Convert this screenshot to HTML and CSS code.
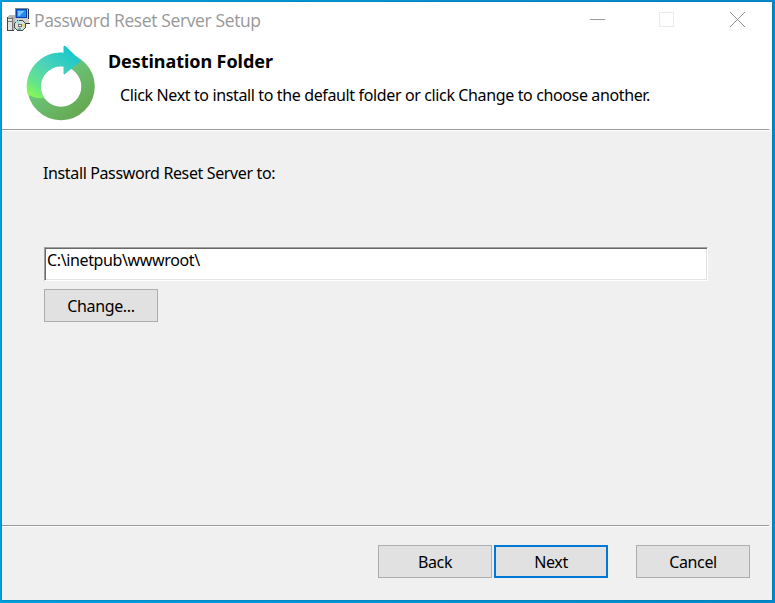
FILE: index.html
```html
<!DOCTYPE html>
<html lang="en">
<head>
<meta charset="utf-8">
<title>Password Reset Server Setup</title>
<link rel="stylesheet" href="styles.css">
</head>
<body>
<div class="window">
  <header class="banner">
    <div class="titlebar">
      <svg class="app-icon" width="24" height="26" viewBox="0 0 24 26" shape-rendering="crispEdges">
        <path d="M9 1h14v11H9z" fill="#c4c8c8"/>
        <path d="M9 1.500h13M9.500 1v10" stroke="#788c98" fill="none"/>
        <path d="M10 2h11v9H10z" fill="#083fae"/>
        <path d="M11 3h9v7h-9z" fill="#2589ef"/>
        <path d="M12 4h6l-4 5h-2z" fill="#72c5ff"/>
        <path d="M22.500 2v10" stroke="#283138"/>
        <path d="M9 12h14v5H9z" fill="#d3d3ce"/>
        <path d="M15 16.500h9v-5" stroke="#333" fill="none"/>
        <path d="M1 10l2-2h6v15l-2 1H1z" fill="#b8b8b3"/>
        <path d="M2 11h4v12H2z" fill="#e3e3df"/>
        <path d="M6.500 10v13M1 11.500h6M2 14.500h4" stroke="#777" fill="none"/>
        <path d="M1.500 10v13.500h6" stroke="#454545" fill="none"/>
        <circle cx="14" cy="18.500" r="5.500" fill="#d9dfd8" stroke="#454c49"/>
        <path d="M14 18.500l-4-4 3-1.500z" fill="#98d8e4"/>
        <path d="M14 18.500l5-2v4z" fill="#d8dc72"/>
        <path d="M14 18.500l1 5-4-1z" fill="#78b8a4"/>
        <circle cx="14" cy="18.500" r="1.500" fill="#fff" stroke="#555" stroke-width=".8"/>
      </svg>
      <span class="caption"><span>Password Reset Server Setup</span></span>
      <svg class="controls" width="158" height="18" viewBox="0 0 158 18" shape-rendering="crispEdges">
        <path d="M0 8.500h15" stroke="#999"/>
        <path d="M69.500 1.500h14v14h-14z" stroke="#eaeaea" fill="none"/>
        <path d="M140 1l15 15M155 1l-15 15" stroke="#909090" shape-rendering="auto"/>
      </svg>
    </div>
    <div class="intro">
      <svg class="logo" width="70" height="78" viewBox="0 0 70 78">
        <defs>
          <linearGradient id="base" x1="0" y1="0" x2=".8" y2="1"><stop offset="0" stop-color="#70d989"/><stop offset=".55" stop-color="#69bd70"/><stop offset="1" stop-color="#66aa53"/></linearGradient>
          <linearGradient id="sweep" x1=".8" y1="0" x2="0" y2="1"><stop offset="0" stop-color="#12c6d1"/><stop offset=".45" stop-color="#4dd2b7"/><stop offset=".75" stop-color="#65e48c"/><stop offset="1" stop-color="#94ff3e"/></linearGradient>
        </defs>
        <circle cx="35" cy="41.500" r="27" fill="none" stroke="url(#base)" stroke-width="13.500"/>
        <path d="M1.500 49A34 34 0 0 1 37.500 7.700V2q0-2 2-1L55 16 39 29q-1 1-1.500-.5V21.500A20.500 20.500 0 0 0 18 53Q8 54 1.500 49Z" fill="url(#sweep)"/>
      </svg>
      <div class="copy">
        <h1><span>Destination Folder</span></h1>
        <p><span>Click Next to install to the default folder or click Change to choose another.</span></p>
      </div>
    </div>
  </header>
  <main class="content">
    <label for="path"><span>Install Password Reset Server to:</span></label>
    <div class="field" id="path"><span>C:\inetpub\wwwroot\</span></div>
    <button class="change"><span>Change...</span></button>
  </main>
  <footer class="actions">
    <button><span>Back</span></button>
    <button class="primary"><span>Next</span></button>
    <button class="cancel"><span>Cancel</span></button>
  </footer>
</div>
</body>
</html>
```
FILE: styles.css
```css
* { box-sizing: border-box; }
body {
  margin: 0;
  width: 775px;
  height: 603px;
  overflow: hidden;
  padding: 2px 3px 3px 2px;
  background: linear-gradient(90deg, #00a2e4, #008bd0);
  font: 16px/20px "Noto Sans", sans-serif;
  color: #000;
}
.window {
  width: 770px;
  height: 598px;
  display: flex;
  flex-direction: column;
  background: #f0f0f0;
  box-shadow: 0 0 2px #176486;
}
.banner { height: 127px; background: #fff; flex: none; }
.titlebar { display: flex; height: 36px; padding: 5px 0 0 4px; }
.app-icon { flex: none; }
.caption {
  flex: none;
  width: 559px;
  padding: 1px 0 0 4px;
  font: 17.5px/24px "Open Sans", sans-serif;
  color: #999;
  white-space: nowrap;
}
.caption span { letter-spacing: -0.38px; }
.controls { flex: none; margin-top: 4px; margin-left: 1px; }
.intro { display: flex; padding: 7px 0 0 24px; }
.logo { flex: none; }
.copy { padding: 5px 0 0 12px; white-space: nowrap; }
h1 { margin: 0; font-size: 18px; line-height: 22px; letter-spacing: -0.07px; }
p { margin: 13px 0 0 12px; letter-spacing: -0.37px; }
.content {
  height: 397px;
  flex: none;
  width: 767px;
  padding: 33px 0 0 41px;
  border-top: 1px solid #999;
  border-bottom: 1px solid #999;
  box-shadow: inset 0 1px #fff, 0 1px #fff;
}
label { display: block; height: 84px; letter-spacing: -0.37px; }
.field {
  width: 664px;
  height: 34px;
  margin-left: 1px;
  padding: 2px;
  background: #fff;
  border: 1px solid #a0a0a0;
  border-right-color: #fff;
  border-bottom-color: #fff;
  box-shadow: inset 1px 1px #696969, inset -1px -1px #e3e3e3;
  letter-spacing: -0.37px;
}
button {
  width: 114px;
  height: 33px;
  padding: 1px 0 0;
  border: 1px solid #adadad;
  background: #e1e1e1;
  color: #000;
  font: inherit;
  letter-spacing: -0.37px;
}
.change { display: block; margin: 8px 0 0 1px; }
.actions { display: flex; padding: 19px 0 0 376px; }
.primary { border: 2px solid #0078d7; margin-left: 2px; }
.cancel { margin-left: 28px; }
```
